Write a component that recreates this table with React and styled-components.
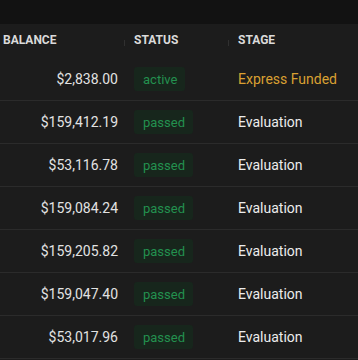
import React from "react";
import styled, { createGlobalStyle } from "styled-components";

const Global = createGlobalStyle`
  html, body { margin: 0; padding: 0; background: #1c1c1c; }
  body { font-family: Roboto, "Noto Sans", "Liberation Sans", sans-serif; }
`;

const Page = styled.div`
  width: 358px;
  height: 360px;
  overflow: hidden;
  background: #1c1c1c;
  display: flex;
  flex-direction: column;
`;

const TopBar = styled.div`
  height: 24px;
  background: #121212;
  flex: none;
`;

const Row = styled.div`
  display: grid;
  grid-template-columns: 134px 104px 1fr;
  align-items: center;
  height: ${(p) => (p.$header ? "34px" : "42px")};
  border-bottom: ${(p) => (p.$header ? "none" : "1px solid #2b2b2b")};
  flex: none;
`;

const HeadCell = styled.div`
  position: relative;
  font-size: 12px;
  font-weight: 700;
  color: #dadada;
  text-transform: uppercase;
  padding-left: ${(p) => (p.$first ? "3px" : "0")};
  padding-bottom: 2px;
  &::after {
    content: "";
    display: ${(p) => (p.$divider ? "block" : "none")};
    position: absolute;
    right: 9px;
    top: 50%;
    width: 1px;
    height: 6px;
    margin-top: -1px;
    background: #303030;
  }
`;

const Balance = styled.div`
  font-size: 14px;
  color: #e2e2e2;
  text-align: right;
  padding-right: 16px;
`;

const Badge = styled.span`
  justify-self: start;
  display: inline-flex;
  align-items: center;
  height: 24px;
  padding: 0 8px 0 9px;
  border-radius: 3px;
  background: #17261c;
  color: #23914f;
  font-size: 13px;
`;

const Stage = styled.div`
  font-size: 14px;
  color: ${(p) => (p.$express ? "#d9a032" : "#ececec")};
`;

const rows = [
  ["$2,838.00", "active", "Express Funded"],
  ["$159,412.19", "passed", "Evaluation"],
  ["$53,116.78", "passed", "Evaluation"],
  ["$159,084.24", "passed", "Evaluation"],
  ["$159,205.82", "passed", "Evaluation"],
  ["$159,047.40", "passed", "Evaluation"],
  ["$53,017.96", "passed", "Evaluation"],
];

export default function App() {
  return (
    <Page>
      <Global />
      <TopBar />
      <Row $header>
        <HeadCell $first $divider>Balance</HeadCell>
        <HeadCell $divider>Status</HeadCell>
        <HeadCell>Stage</HeadCell>
      </Row>
      {rows.map(([bal, status, stage], i) => (
        <Row key={i}>
          <Balance>{bal}</Balance>
          <Badge>{status}</Badge>
          <Stage $express={stage === "Express Funded"}>{stage}</Stage>
        </Row>
      ))}
    </Page>
  );
}
